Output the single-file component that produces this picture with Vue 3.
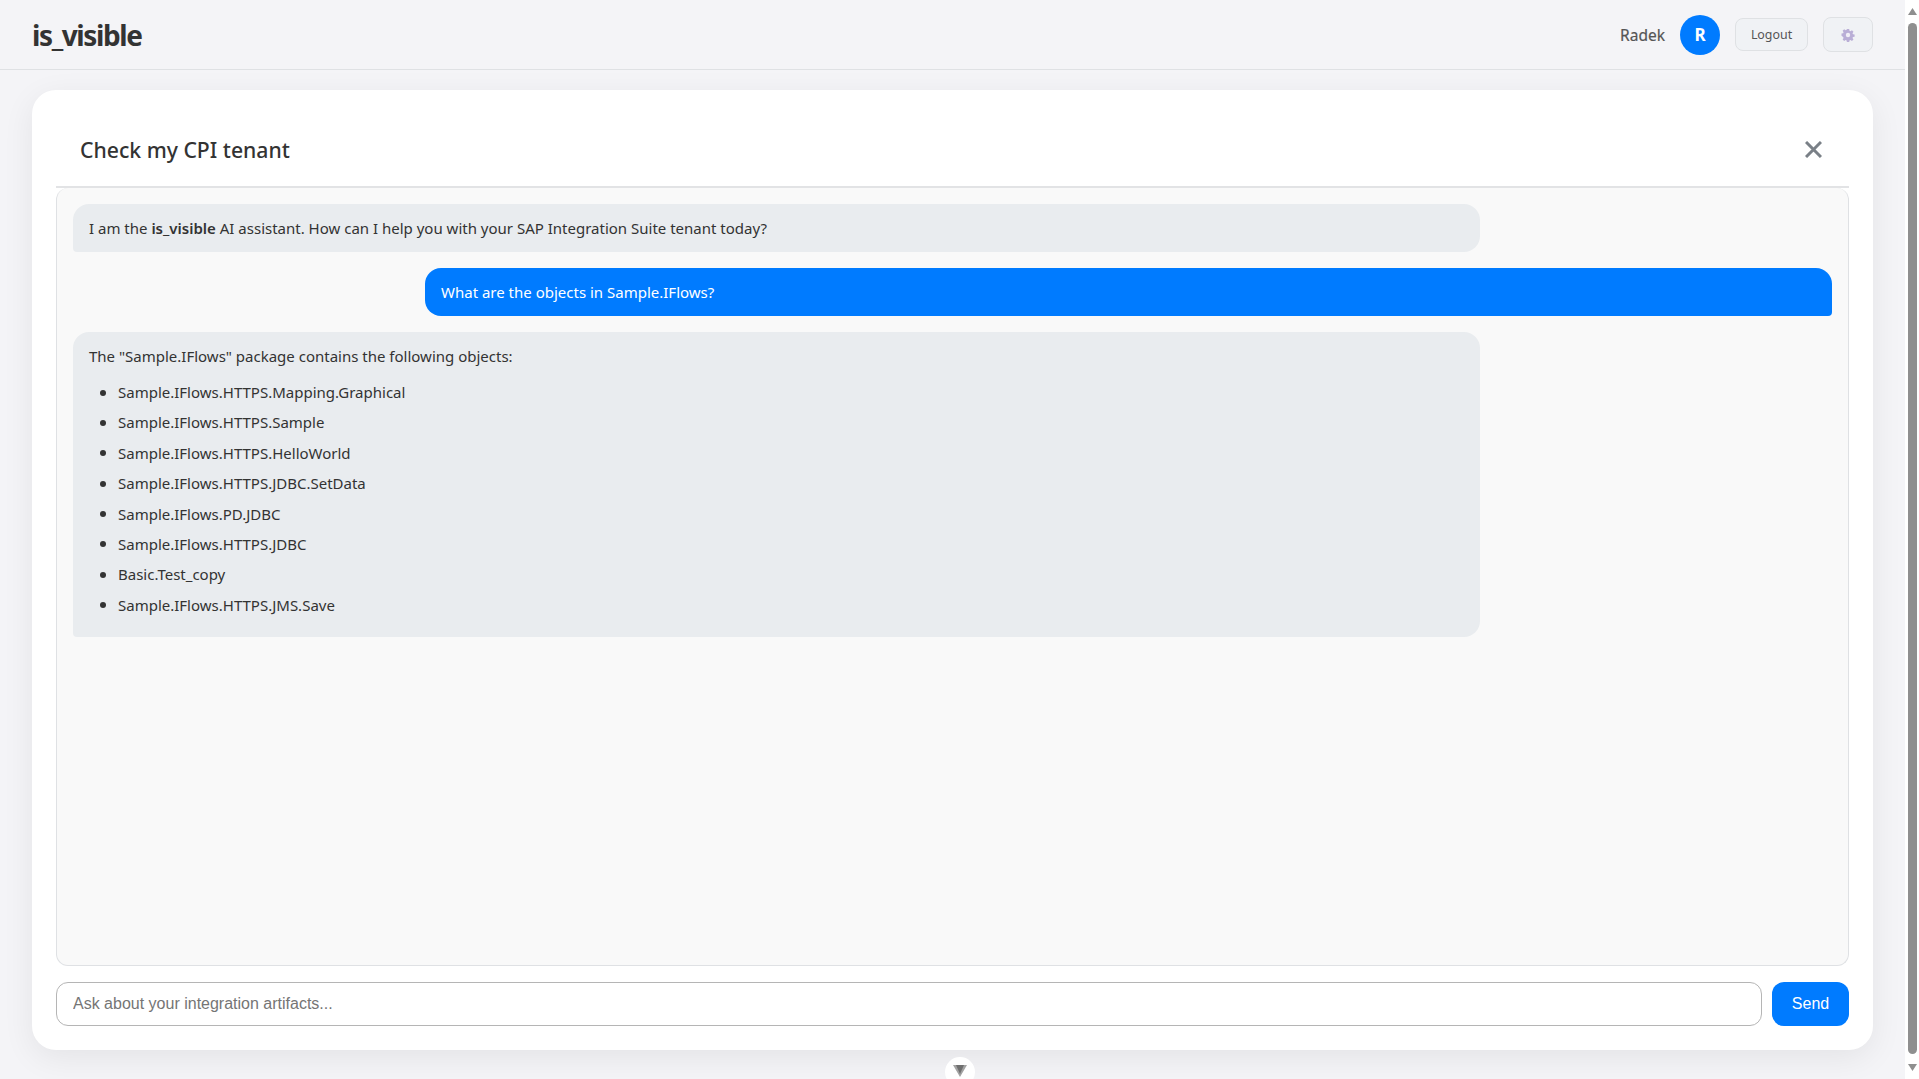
<script setup>
const items = [
  'Sample.IFlows.HTTPS.Mapping.Graphical',
  'Sample.IFlows.HTTPS.Sample',
  'Sample.IFlows.HTTPS.HelloWorld',
  'Sample.IFlows.HTTPS.JDBC.SetData',
  'Sample.IFlows.PD.JDBC',
  'Sample.IFlows.HTTPS.JDBC',
  'Basic.Test_copy',
  'Sample.IFlows.HTTPS.JMS.Save',
]
</script>

<template>
  <div class="shell">
    <div class="page">
      <header class="topbar">
        <div class="logo">is_visible</div>
        <div class="user">
          <span class="name">Radek</span>
          <span class="avatar">R</span>
          <button class="logout">Logout</button>
          <button class="settings" aria-label="Settings">
            <svg width="14" height="14" viewBox="0 0 14 14">
              <path d="M5.8 1h2.4l.3 1.7 1.1.5 1.5-1 1.6 1.7-1 1.4.5 1.1 1.7.3v2.4l-1.7.3-.5 1.1 1 1.4-1.6 1.7-1.5-1-1.1.5-.3 1.7H5.8l-.3-1.7-1.1-.5-1.5 1-1.6-1.7 1-1.4-.5-1.1L.1 8.1V5.7l1.7-.3.5-1.1-1-1.4 1.6-1.7 1.5 1 1.1-.5z" fill="#b9aed6" transform="translate(.4 .1) scale(.95)"/>
              <circle cx="7" cy="7" r="2.2" fill="#f0eef6"/>
            </svg>
          </button>
        </div>
      </header>

      <main class="main">
        <section class="card">
          <div class="card-head">
            <h2 class="title">Check my CPI tenant</h2>
            <button class="close" aria-label="Close">
              <svg width="17" height="17" viewBox="0 0 17 17">
                <path d="M1 1l15 15M16 1L1 16" stroke="#7a8087" stroke-width="3" fill="none"/>
              </svg>
            </button>
          </div>
          <div class="chat">
            <div class="msg bot">
              I am the <strong>is_visible</strong> AI assistant. How can I help you with your SAP Integration Suite tenant today?
            </div>
            <div class="msg me">What are the objects in Sample.IFlows?</div>
            <div class="msg bot">
              <p class="lead">The "Sample.IFlows" package contains the following objects:</p>
              <ul class="list">
                <li v-for="i in items" :key="i">{{ i }}</li>
              </ul>
            </div>
          </div>
          <div class="composer">
            <input class="ask" placeholder="Ask about your integration artifacts..." />
            <button class="send">Send</button>
          </div>
        </section>
        <button class="down" aria-label="Scroll down">
          <svg width="14" height="12" viewBox="0 0 14 12">
            <path d="M0 0l4 0 3 4 3-4 4 0-7 12z" fill="#a3a3a3"/>
            <path d="M3 0h8L7 9z" fill="#6f6f6f"/>
          </svg>
        </button>
      </main>
    </div>
    <div class="scrollbar" aria-hidden="true">
      <svg class="arrow" width="9" height="7" viewBox="0 0 9 7"><path d="M4.5 0L9 7H0z" fill="#8f8f8f"/></svg>
      <div class="thumb"></div>
      <svg class="arrow" width="9" height="7" viewBox="0 0 9 7"><path d="M0 0h9L4.5 7z" fill="#8f8f8f"/></svg>
    </div>
  </div>
</template>

<style>
html, body { margin: 0; padding: 0; overflow: hidden; }
</style>

<style scoped>
.shell {
  display: flex;
  height: 1079px;
  font-family: "Noto Sans", "Open Sans", sans-serif;
  background: #fff;
  overflow: hidden;
}
.page {
  width: 1905px;
  flex: none;
  background: #f4f4f7;
  display: flex;
  flex-direction: column;
}
.topbar {
  height: 70px;
  flex: none;
  box-sizing: border-box;
  border-bottom: 1px solid #dfe1e4;
  display: flex;
  align-items: center;
  justify-content: space-between;
  padding: 0 32px;
}
.logo {
  font-size: 28px;
  font-weight: 700;
  color: #333;
  letter-spacing: -1.4px;
}
.user { display: flex; align-items: center; }
.name { font-size: 15.5px; font-weight: 400; color: #555; margin-right: 15px; -webkit-text-stroke: 0.2px #555; }
.avatar {
  width: 40px; height: 40px; border-radius: 50%;
  background: #007bff; color: #fff;
  display: flex; align-items: center; justify-content: center;
  font-size: 17px; font-weight: 700;
  margin-right: 15px;
}
.logout {
  width: 73px; height: 33px;
  border: 1px solid #dfe1e4; border-radius: 8px;
  background: #f0f2f5; color: #555;
  font-family: inherit; font-size: 12.4px; padding: 0;
  margin-right: 15px;
  margin-top: -1px;
}
.settings {
  width: 50px; height: 35px;
  border: 1px solid #dfe1e4; border-radius: 8px;
  background: #f0f2f5; padding: 0;
  display: flex; align-items: center; justify-content: center;
}
.main {
  flex: 1;
  position: relative;
  padding: 20px 32px 0;
  min-height: 0;
}
.card {
  height: 960px;
  box-sizing: border-box;
  background: #fff;
  border-radius: 24px;
  box-shadow: 0 8px 32px rgba(0, 0, 0, 0.07);
  padding: 0 24px 24px;
  display: flex;
  flex-direction: column;
}
.card-head {
  height: 98px;
  flex: none;
  box-sizing: border-box;
  border-bottom: 2px solid #e2e3e5;
  display: flex;
  align-items: center;
  justify-content: space-between;
  padding: 22px 27px 0 24px;
}
.title { margin: 0; font-size: 21.2px; font-weight: 500; color: #333; }
.close { border: 0; background: none; padding: 0; display: flex; }
.chat {
  height: 778px;
  flex: none;
  box-sizing: border-box;
  border: 1px solid #dfe1e4;
  border-top: 0;
  border-radius: 12px;
  background: #f9f9f9;
  padding: 16px 16px 0;
  display: flex;
  flex-direction: column;
  gap: 16px;
  font-size: 15px;
  line-height: 24px;
  color: #333;
}
.msg {
  width: 1407px;
  box-sizing: border-box;
  padding: 12px 16px;
  border-radius: 16px;
}
.bot { background: #e9ecef; border-bottom-left-radius: 4px; align-self: flex-start; }
.me { background: #007bff; color: #fff; border-bottom-right-radius: 4px; align-self: flex-end; }
.bot strong { font-weight: 600; }
.lead { margin: 0; }
.list { margin: 12px 0 0; padding: 0 0 1.4px 29px; list-style: none; }
.list li { height: 24px; margin-bottom: 6.4px; position: relative; }
.list li::before {
  content: "";
  position: absolute;
  left: -18.5px;
  top: 9.5px;
  width: 6px;
  height: 6px;
  border-radius: 50%;
  background: #333;
}
.composer { margin-top: 16px; display: flex; gap: 10px; }
.ask {
  flex: 1;
  height: 44px;
  box-sizing: border-box;
  border: 1px solid #b5b5b5;
  border-radius: 12px;
  padding: 0 16px;
  font-family: "Liberation Sans", Arial, sans-serif;
  font-size: 16px;
  color: #333;
  outline: none;
  background: #fff;
}
.ask::placeholder { color: #757575; }
.send {
  width: 77px;
  height: 44px;
  border: 0;
  border-radius: 12px;
  background: #007bff;
  color: #fff;
  font-family: "Liberation Sans", Arial, sans-serif;
  font-size: 16px;
  padding: 0;
}
.down {
  position: absolute;
  left: 945px;
  top: 987px;
  width: 30px;
  height: 30px;
  border: 0;
  border-radius: 50%;
  background: #fff;
  padding: 8px 0 0;
  display: flex;
  justify-content: center;
  align-items: flex-start;
}
.scrollbar {
  flex: 1;
  background: #fff;
  display: flex;
  flex-direction: column;
  align-items: center;
  padding: 8px 0;
  box-sizing: border-box;
}
.arrow { flex: none; }
.thumb {
  flex: 1;
  width: 9px;
  margin: 8px 0 10px;
  border-radius: 5px;
  background: #8f8f8f;
}
</style>
